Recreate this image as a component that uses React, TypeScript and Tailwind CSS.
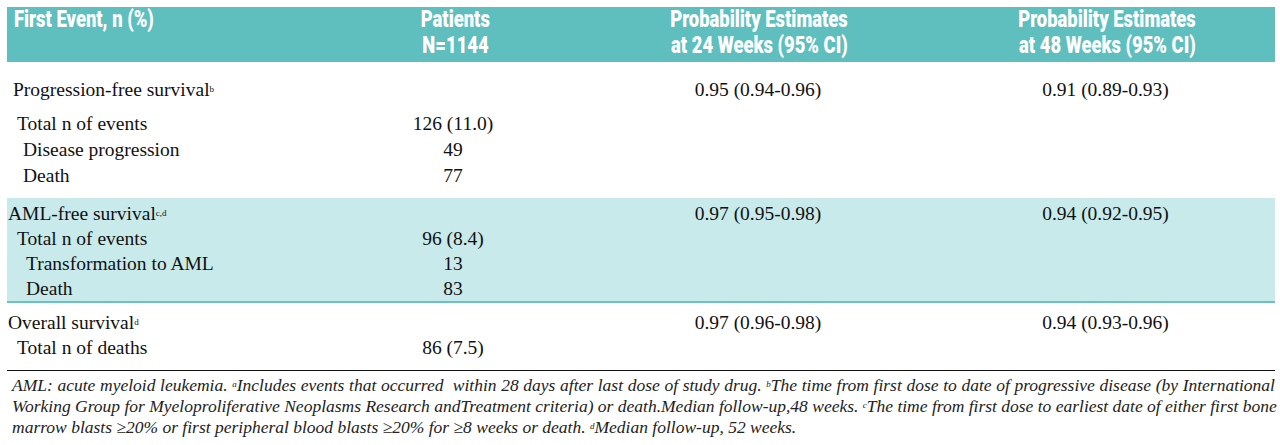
const serif = { fontFamily: '"Liberation Serif", "Times New Roman", serif' };

type Row = {
  label: string;
  sup?: string;
  indent: string;
  n?: string;
  w24?: string;
  w48?: string;
};

const pfsRows: Row[] = [
  { label: "Progression-free survival", sup: "b", indent: "pl-[6px]", w24: "0.95 (0.94-0.96)", w48: "0.91 (0.89-0.93)" },
];
const pfsEvents: Row[] = [
  { label: "Total n of events", indent: "pl-[10px]", n: "126 (11.0)" },
  { label: "Disease progression", indent: "pl-[16px]", n: "49" },
  { label: "Death", indent: "pl-[16px]", n: "77" },
];
const amlRows: Row[] = [
  { label: "AML-free survival", sup: "c,d", indent: "pl-[1px]", w24: "0.97 (0.95-0.98)", w48: "0.94 (0.92-0.95)" },
  { label: "Total n of events", indent: "pl-[10px]", n: "96 (8.4)" },
  { label: "Transformation to AML", indent: "pl-[19px]", n: "13" },
  { label: "Death", indent: "pl-[19px]", n: "83" },
];
const osRows: Row[] = [
  { label: "Overall survival", sup: "d", indent: "pl-[1px]", w24: "0.97 (0.96-0.98)", w48: "0.94 (0.93-0.96)" },
  { label: "Total n of deaths", indent: "pl-[10px]", n: "86 (7.5)" },
];

function TableRow({ row, h }: { row: Row; h: string }) {
  return (
    <div className={`grid grid-cols-[323px_242px_372px_331px] ${h} items-center text-[19.5px] text-[#111]`} style={serif}>
      <div className={`${row.indent} whitespace-nowrap`}>
        {row.label}
        {row.sup && <sup className="text-[9px] relative -top-[4px]">{row.sup}</sup>}
      </div>
      <div className="text-center pl-[4px]">{row.n}</div>
      <div className="text-center">{row.w24}</div>
      <div className="text-center pr-2">{row.w48}</div>
    </div>
  );
}

function Head({ children, origin }: { children: React.ReactNode; origin: string }) {
  return (
    <span className={`inline-block scale-x-[0.8] ${origin} whitespace-nowrap`}>{children}</span>
  );
}

export default function App() {
  return (
    <div className="w-[1280px] h-[445px] bg-white overflow-hidden pt-[7px] pl-[7px]">
      <div className="w-[1268px]">
        <div
          className="grid grid-cols-[323px_242px_372px_331px] h-[55px] bg-[#5fbebe] text-white font-black text-[23px] leading-[26px]"
          style={{ fontFamily: 'Roboto, "Liberation Sans", sans-serif' }}
        >
          <div className="pl-[7px]">
            <Head origin="origin-left">First Event, n (%)</Head>
          </div>
          <div className="flex flex-col items-center pl-[8px]">
            <Head origin="origin-center">Patients</Head>
            <Head origin="origin-center">N=1144</Head>
          </div>
          <div className="flex flex-col items-center pl-[2px]">
            <Head origin="origin-center">Probability Estimates</Head>
            <Head origin="origin-center">at 24 Weeks (95% CI)</Head>
          </div>
          <div className="flex flex-col items-center pr-[5px]">
            <Head origin="origin-center">Probability Estimates</Head>
            <Head origin="origin-center">at 48 Weeks (95% CI)</Head>
          </div>
        </div>

        <div className="pt-[13px] pb-[11px]">
          {pfsRows.map((r) => (
            <TableRow key={r.label} row={r} h="h-[26px]" />
          ))}
          <div className="h-[8px]" />
          {pfsEvents.map((r) => (
            <TableRow key={r.label} row={r} h="h-[26px]" />
          ))}
        </div>

        <div className="bg-[#c8eaeb] pt-[1px] pb-[2px] border-b-2 border-[#6cc2c2]">
          {amlRows.map((r) => (
            <TableRow key={r.label} row={r} h="h-[25px]" />
          ))}
        </div>

        <div className="pt-[5px] pb-[12px] border-b border-[#111]">
          {osRows.map((r) => (
            <TableRow key={r.label} row={r} h="h-[25px]" />
          ))}
        </div>

        <div
          className="pt-[4px] pl-[5px] italic text-[17.5px] leading-[21px] text-[#222]"
          style={serif}
        >
          <p className="text-justify [text-align-last:justify] whitespace-nowrap">
            AML: acute myeloid leukemia. <sup className="text-[9px]">a</sup>Includes events that occurred&nbsp; within 28 days after last dose of study drug. <sup className="text-[9px]">b</sup>The time from first dose to date of progressive disease (by International
          </p>
          <p className="text-justify [text-align-last:justify] whitespace-nowrap">
            Working Group for Myeloproliferative Neoplasms Research andTreatment criteria) or death.Median follow-up,48 weeks. <sup className="text-[9px]">c</sup>The time from first dose to earliest date of either first bone
          </p>
          <p>
            marrow blasts ≥20% or first peripheral blood blasts ≥20% for ≥8 weeks or death. <sup className="text-[9px]">d</sup>Median follow-up, 52 weeks.
          </p>
        </div>
      </div>
    </div>
  );
}
